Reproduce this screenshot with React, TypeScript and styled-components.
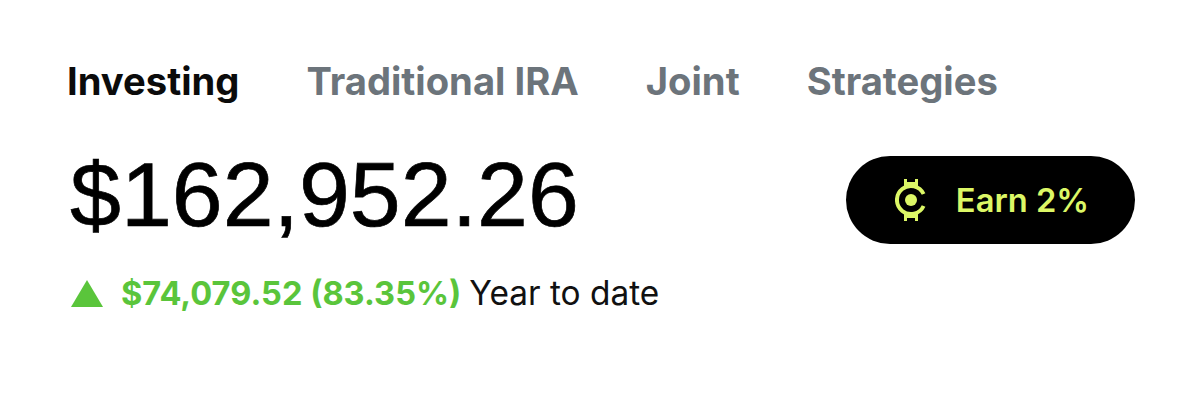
import React from "react";
import styled, { createGlobalStyle } from "styled-components";

const Global = createGlobalStyle`
  html, body { margin: 0; padding: 0; background: #fff; }
  body { font-family: "Inter", "Liberation Sans", sans-serif; }
`;

const Page = styled.main`
  width: 1200px;
  height: 409px;
  box-sizing: border-box;
  padding: 56px 65px 0 67px;
  overflow: hidden;
`;

const Tabs = styled.nav`
  display: flex;
  gap: 67px;
`;

const Tab = styled.span<{ $active?: boolean }>`
  font-size: 38.2px;
  line-height: 50px;
  font-weight: 700;
  color: ${(p) => (p.$active ? "#0b0b0b" : "#6c747b")};
`;

const BalanceRow = styled.section`
  display: flex;
  align-items: center;
  justify-content: space-between;
  margin-top: 36px;
`;

const Balance = styled.h1`
  margin: 0 0 0 3px;
  padding-bottom: 12px;
  font-family: "Liberation Sans", sans-serif;
  font-size: 91.5px;
  line-height: 104px;
  font-weight: 400;
  color: #000;
  -webkit-text-stroke: 0.7px #000;
`;

const EarnButton = styled.button`
  display: flex;
  align-items: center;
  justify-content: center;
  gap: 28px;
  width: 289px;
  height: 88px;
  padding: 0 0 0 3px;
  border: none;
  border-radius: 44px;
  background: #000;
  color: #dcf766;
  font-family: "Inter", sans-serif;
  font-size: 32.7px;
  font-weight: 600;
`;

const ChangeRow = styled.div`
  display: flex;
  align-items: center;
  margin-top: 12px;
  margin-left: 4px;
  line-height: 46px;
`;

const Triangle = styled.svg`
  width: 32px;
  height: 27px;
  margin-right: 18px;
`;

const Change = styled.span`
  font-size: 32.6px;
  color: #5ac53b;
  font-weight: 700;
`;

const Period = styled.span`
  font-size: 33.4px;
  color: #111;
  margin-left: 8px;
`;

export default function App() {
  return (
    <Page>
      <Global />
      <Tabs>
        <Tab $active>Investing</Tab>
        <Tab>Traditional IRA</Tab>
        <Tab>Joint</Tab>
        <Tab>Strategies</Tab>
      </Tabs>
      <BalanceRow>
        <Balance>$162,952.26</Balance>
        <EarnButton>
          <svg width="33" height="42" viewBox="0 0 33 42" fill="none" stroke="#dcf766" strokeWidth="4">
            <path d="M28.6 15A14 14 0 1 0 28.6 27" />
            <circle cx="16" cy="21" r="6" fill="#dcf766" stroke="none" />
            <path d="M10.5 7V0M21.5 7V0M10.5 4.5H21.5M10.5 35V42M21.5 35V42M10.5 37.5H21.5" strokeWidth="3" />
          </svg>
          Earn 2%
        </EarnButton>
      </BalanceRow>
      <ChangeRow>
        <Triangle viewBox="0 0 32 27">
          <path d="M16 0L32 27H0Z" fill="#5ac53b" />
        </Triangle>
        <Change>$74,079.52 (83.35%)</Change>
        <Period>Year to date</Period>
      </ChangeRow>
    </Page>
  );
}
